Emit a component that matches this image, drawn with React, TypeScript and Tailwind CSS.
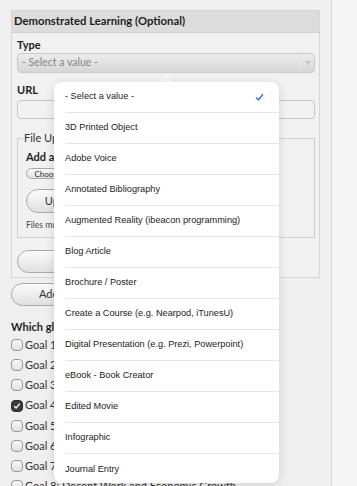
import React from 'react';

const options = [
  '- Select a value -',
  '3D Printed Object',
  'Adobe Voice',
  'Annotated Bibliography',
  'Augmented Reality (ibeacon programming)',
  'Blog Article',
  'Brochure / Poster',
  'Create a Course (e.g. Nearpod, iTunesU)',
  'Digital Presentation (e.g. Prezi, Powerpoint)',
  'eBook - Book Creator',
  'Edited Movie',
  'Infographic',
  'Journal Entry',
];

const goals = [
  'Goal 1: No Poverty',
  'Goal 2: Zero Hunger',
  'Goal 3: Good Health and Well-being',
  'Goal 4: Quality Education',
  'Goal 5: Gender Equality',
  'Goal 6: Clean Water and Sanitation',
  'Goal 7: Affordable and Clean Energy',
  'Goal 8: Decent Work and Economic Growth',
];

const pillBtn =
  'rounded-full border border-[#a9a9a9] bg-gradient-to-b from-[#fbfbfb] to-[#e0e0e0] text-[#333] flex items-center justify-center';

const App: React.FC = () => {
  return (
    <div
      className="relative w-[357px] h-[486px] overflow-hidden bg-[#f3f3f3] flex"
      style={{ fontFamily: 'Lato, "Open Sans", sans-serif' }}
    >
      {/* main column */}
      <div className="w-[332px] shrink-0 border-r border-[#d4d4d4] bg-[#efefef] pl-[11px] pt-[10px]">
        <div className="w-[309px] border border-[#d6d6d6] bg-[#f1f1f1] pb-[4px]">
          <div className="h-[22px] bg-[#dcdcdc] border-b border-[#d0d0d0] flex items-center px-[2px] text-[11.3px] font-bold text-[#1e1e1e]">
            Demonstrated Learning (Optional)
          </div>
          <div className="px-[5px]">
            <div className="mt-[5px] h-[14px] text-[11px] font-bold text-[#1e1e1e] leading-[14px]">Type</div>
            <div className="mt-[1px] h-[20px] w-[298px] rounded-[4px] border border-[#cbcbcb] bg-gradient-to-b from-[#ececec] to-[#d6d6d6] flex items-center">
              <span className="flex-1 pl-[4px] text-[10.5px] text-[#858585]">- Select a value -</span>
              <span className="w-[14px] h-full border-l border-[#e4e4e4] flex items-center justify-center">
                <span className="block w-0 h-0 border-l-[3px] border-r-[3px] border-t-[4px] border-l-transparent border-r-transparent border-t-[#c6c6c6]" />
              </span>
            </div>
            <div className="mt-[10px] h-[14px] text-[11px] font-bold text-[#1e1e1e] leading-[14px]">URL</div>
            <div className="mt-[3px] h-[19px] w-[298px] rounded-[4px] border border-[#c6c6c6] bg-[#f1f1f1]" />
            <fieldset className="mt-[12px] w-[298px] h-[107px] border border-[#d0d0d0] px-[8px] pb-[6px]">
              <legend className="ml-[-3px] px-[1px] text-[11px] text-[#333] leading-[14px]">File Upload</legend>
              <div className="mt-[5px] text-[11px] font-bold text-[#1e1e1e] leading-[14px]">Add a new file</div>
              <div className={`${pillBtn} mt-[4px] w-[58px] h-[11px] text-[8px] leading-none`}>Choose File</div>
              <div className={`${pillBtn} mt-[10px] w-[72px] h-[24px] text-[11px]`}>Upload</div>
              <div className="mt-[6px] text-[8.5px] text-[#444] leading-[12px]">Files must be less than 64 MB.</div>
            </fieldset>
            <div className={`${pillBtn} mt-[12px] w-[112px] h-[23px] text-[11px]`}>Remove</div>
          </div>
        </div>
        <div className={`${pillBtn} mt-[5px] w-[140px] h-[23px] text-[11px]`}>Add another item</div>
        <div className="mt-[14px] text-[11px] font-bold text-[#1e1e1e] leading-[14px]">
          Which global goals does this relate to?
        </div>
        <div className="mt-[1px] flex flex-col">
          {goals.map((g, i) => (
            <div key={g} className="h-[20.2px] flex items-center gap-[2px] text-[11px] text-[#333]">
              {i === 3 ? (
                <span className="w-[12px] h-[12px] rounded-[4px] bg-[#3b3b3b] border border-[#2a2a2a] flex items-center justify-center">
                  <svg width="8" height="8" viewBox="0 0 8 8">
                    <path d="M1.2 4.2 L3.1 6 L6.8 1.6" fill="none" stroke="#fff" strokeWidth="1.3" />
                  </svg>
                </span>
              ) : (
                <span className="w-[12px] h-[12px] rounded-[4px] border border-[#999] bg-gradient-to-b from-[#f8f8f8] to-[#e0e0e0]" />
              )}
              <span className="whitespace-nowrap">{g}</span>
            </div>
          ))}
        </div>
      </div>
      <div className="flex-1 bg-[#f5f5f5]" />

      {/* popover pointer */}
      <div className="absolute left-[157px] top-[74px] w-0 h-0 border-l-[8px] border-r-[8px] border-b-[8px] border-l-transparent border-r-transparent border-b-[#f6f6f6]" />

      {/* native select popover */}
      <div
        className="absolute left-[54px] top-[82px] w-[225px] h-[401px] rounded-[8px] bg-white shadow-[0_2px_10px_rgba(0,0,0,0.12)] overflow-hidden"
        style={{ fontFamily: '"Liberation Sans", Arial, sans-serif' }}
      >
        {options.map((o, i) => (
          <div key={o} className="pl-[11px] h-[31px]">
            <div
              className={`h-full flex items-center justify-between pr-[15px] text-[9.2px] text-[#222] ${
                i < options.length - 1 ? 'border-b border-[#e6e6e6]' : ''
              }`}
            >
              <span>{o}</span>
              {i === 0 && (
                <svg width="9" height="8" viewBox="0 0 9 8">
                  <path d="M1 4.5 L3.4 6.8 L8 1.2" fill="none" stroke="#2f7ee3" strokeWidth="1.5" />
                </svg>
              )}
            </div>
          </div>
        ))}
      </div>
    </div>
  );
};

export default App;
